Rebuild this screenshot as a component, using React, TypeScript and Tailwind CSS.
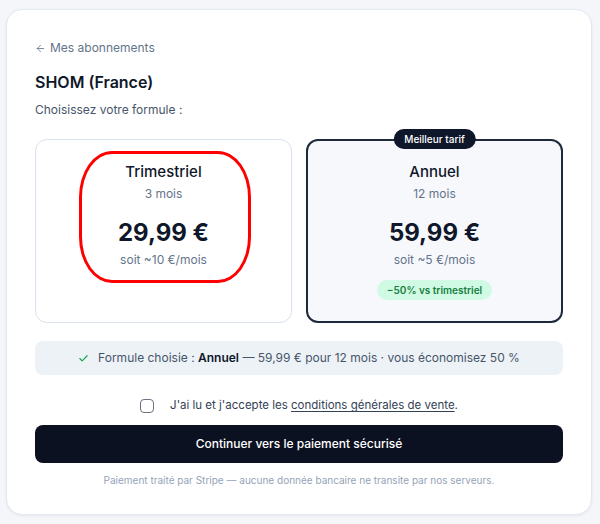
import { ArrowLeft, Check } from "lucide-react";

const plans = [
  {
    name: "Trimestriel",
    duration: "3 mois",
    price: "29,99 €",
    monthly: "soit ~10 €/mois",
    selected: false,
  },
  {
    name: "Annuel",
    duration: "12 mois",
    price: "59,99 €",
    monthly: "soit ~5 €/mois",
    selected: true,
    badge: "Meilleur tarif",
    saving: "−50% vs trimestriel",
  },
];

export default function App() {
  return (
    <div
      className="min-h-[524px] bg-[#f5f6fa] pl-[6px] pr-[8px] pt-[9px] text-[#0f172a]"
      style={{ fontFamily: "Inter, 'Noto Sans', sans-serif" }}
    >
      <div className="rounded-[16px] border border-[#e2e8f0] bg-white px-[28px] pt-[28px] pb-[26px] shadow-[0_1px_3px_rgba(15,23,42,0.06)]">
        {/* Header */}
        <a className="flex items-center gap-[4px] text-[12px] leading-[20px] text-[#64748b]">
          <ArrowLeft size={11} strokeWidth={1.8} />
          <span>Mes abonnements</span>
        </a>
        <h1 className="mt-[10px] text-[16px] leading-[28px] font-semibold">
          SHOM (France)
        </h1>
        <p className="mt-[4px] text-[12px] leading-[20px] text-[#475569]">
          Choisissez votre formule :
        </p>

        {/* Plans */}
        <div className="relative mt-[19px] grid grid-cols-2 gap-[14px]">
          {plans.map((plan) => (
            <div
              key={plan.name}
              className={`relative flex h-[184px] flex-col items-center rounded-[12px] ${
                plan.selected
                  ? "border-2 border-[#1e293b] bg-[#f7f8fc] pt-[20px]"
                  : "border border-[#d9e2ec] bg-white pt-[21px]"
              }`}
            >
              {plan.badge && (
                <span className="absolute -top-[12px] left-1/2 flex h-[20px] -translate-x-1/2 items-center rounded-full bg-[#0f172a] px-[11px] text-[10px] font-medium text-white">
                  {plan.badge}
                </span>
              )}
              <div className="text-[15px] leading-[22px] font-medium">{plan.name}</div>
              <div className="mt-[2px] text-[12px] leading-[18px] text-[#64748b]">{plan.duration}</div>
              <div className="mt-[14px] text-[24px] leading-[32px] font-bold">{plan.price}</div>
              <div className="mt-[2px] text-[12px] leading-[18px] text-[#64748b]">{plan.monthly}</div>
              {plan.saving && (
                <span className="mt-[11px] flex h-[20px] items-center rounded-full bg-[#d1fae5] px-[10px] text-[10px] font-semibold text-[#15803d]">
                  {plan.saving}
                </span>
              )}
            </div>
          ))}
          {/* annotation */}
          <div className="pointer-events-none absolute left-[44px] top-[12px] h-[132px] w-[172px] rounded-[33px/46px] border-[3px] border-[#ff0000]" />
        </div>

        {/* Summary */}
        <div className="mt-[18px] flex h-[34px] items-center justify-center gap-[9px] rounded-[8px] bg-[#edf2f7] text-[12px] text-[#475569]">
          <Check size={11} strokeWidth={2.5} className="text-[#16a34a]" />
          <span>
            Formule choisie : <strong className="font-semibold text-[#0f172a]">Annuel</strong> — 59,99 € pour
            12 mois · vous économisez 50 %
          </span>
        </div>

        {/* CGV */}
        <label className="mt-[21px] flex h-[20px] items-center justify-center gap-[16px] text-[11.5px] text-[#334155]">
          <span className="h-[14px] w-[14px] rounded-[4px] border-[1.5px] border-[#6b7280] bg-white" />
          <span>
            J'ai lu et j'accepte les{" "}
            <span className="underline underline-offset-2">conditions générales de vente</span>.
          </span>
        </label>

        <button className="mt-[9px] flex h-[38px] w-full items-center justify-center rounded-[8px] bg-[#0b1120] text-[12px] font-medium text-white">
          Continuer vers le paiement sécurisé
        </button>

        <p className="mt-[9px] text-center text-[10px] leading-[16px] text-[#94a3b8]">
          Paiement traité par Stripe — aucune donnée bancaire ne transite par nos serveurs.
        </p>
      </div>
    </div>
  );
}
